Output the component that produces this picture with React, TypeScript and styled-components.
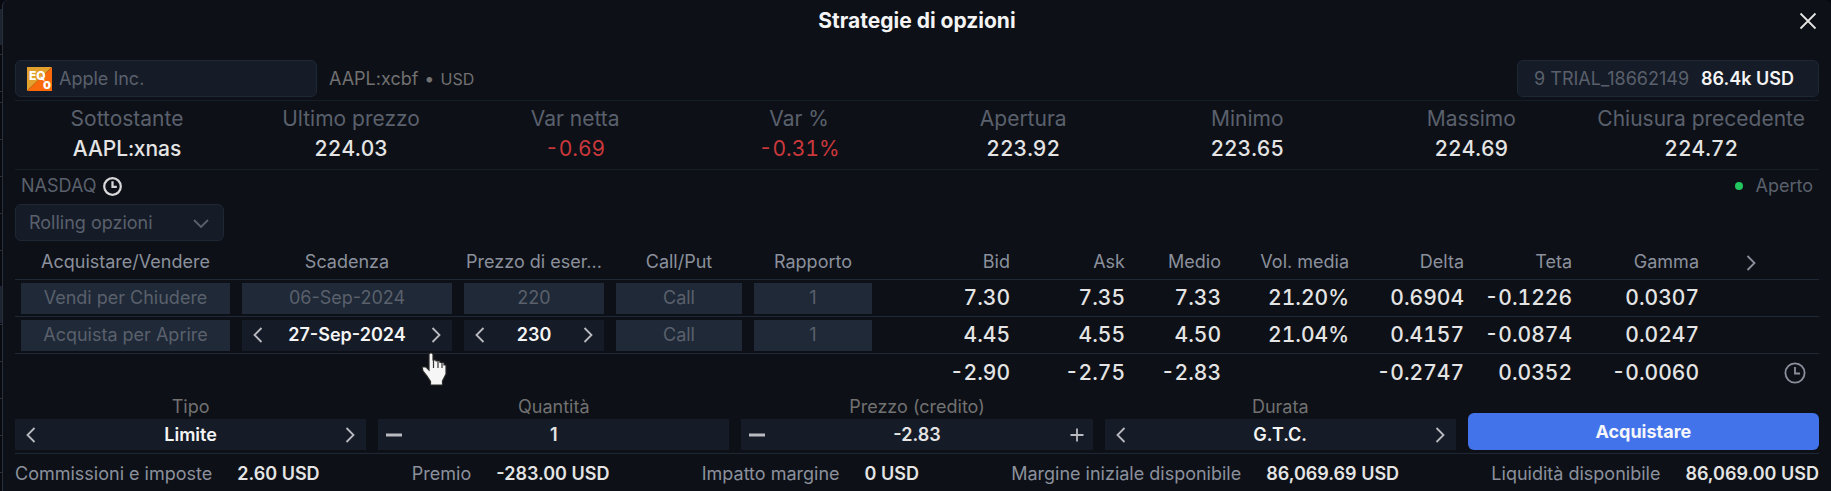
import React, { useState } from 'react';
import styled, { createGlobalStyle, css } from 'styled-components';

const color = {
  backdrop: '#080a10',
  panel: '#0d1017',
  edge: '#27303d',
  field: '#151b27',
  fieldBorder: '#1d2834',
  rule: '#161e28',
  tableRule: '#1e2836',
  locked: '#1f2937',
  faint: '#5a606c',
  muted: '#8b909c',
  gray: '#717171',
  text: '#e4e4e4',
  bright: '#f4f4f4',
  red: '#cb383c',
  green: '#22c55e',
  primary: '#4373ea',
};

const GlobalStyle = createGlobalStyle`
  *, *::before, *::after { box-sizing: border-box; }
  html {
    background:
      linear-gradient(#1d2430, #1d2430) 0 9px / 2px 36px no-repeat,
      linear-gradient(#1d2430, #1d2430) 0 286px / 2px 37px no-repeat,
      repeating-linear-gradient(${color.edge} 0 1px, ${color.backdrop} 1px 37px) 0 102px;
  }
  body {
    margin: 0;
    padding-left: 2px;
    color: ${color.text};
    font-family: Inter, "Liberation Sans", sans-serif;
    font-size: 18px;
    line-height: 24px;
  }
  button, input, select {
    margin: 0;
    padding: 0;
    border: 0;
    background: none;
    color: inherit;
    font: inherit;
  }
  button { cursor: pointer; }
  button:disabled { cursor: default; }
  svg { display: block; flex: none; }
`;

/* Raises the hyphen to the height of the figures. */
const figures = css`
  font-feature-settings: "case";
`;

const Panel = styled.main`
  position: relative;
  min-height: 100vh;
  padding: 0 12px;
  border-left: 1px solid ${color.edge};
  border-top-left-radius: 6px;
  border-top-right-radius: 6px;
  background: ${color.panel};
`;

const TitleBar = styled.header`
  display: grid;
  grid-template-columns: 24px 1fr 24px;
  align-items: center;
  height: 42px;
`;

const Title = styled.h1`
  grid-column: 2;
  margin: 0;
  color: ${color.bright};
  font-size: 21px;
  font-weight: 700;
  text-align: center;
`;

const IconButton = styled.button`
  display: flex;
  align-items: center;
  justify-content: center;
  width: 24px;
  height: 24px;
  color: #b9bbc0;
`;

const CloseButton = styled(IconButton)`
  width: 22px;
  margin-left: auto;
  color: ${color.text};
`;

const InstrumentRow = styled.section`
  display: flex;
  align-items: center;
  gap: 12px;
  padding: 18px 0 3px;
  border-bottom: 1px solid ${color.rule};
`;

const box = css`
  display: flex;
  align-items: center;
  height: 37px;
  border: 1px solid ${color.fieldBorder};
  border-radius: 6px;
  background: ${color.field};
`;

const SearchBox = styled.label`
  ${box}
  gap: 7px;
  width: 302px;
  padding: 0 11px;
`;

const SearchInput = styled.input`
  flex: 1;
  min-width: 0;
  outline: none;
  &::placeholder { color: ${color.faint}; opacity: 1; }
`;

const Ticker = styled.p`
  display: flex;
  align-items: center;
  gap: 6px;
  margin: 0;
  color: ${color.gray};
`;

const Currency = styled.span`
  font-size: 16px;
`;

const Account = styled.button`
  ${box}
  gap: 12px;
  margin-left: auto;
  padding: 0 24px 0 16px;
  color: ${color.faint};
`;

const Balance = styled.span`
  color: ${color.bright};
  font-weight: 600;
`;

const Quotes = styled.dl`
  display: flex;
  margin: 0;
  padding: 3px 0 5px;
  border-bottom: 1px solid ${color.rule};
`;

const Quote = styled.div`
  flex: 1 0 0;
  min-width: max-content;
  padding: 0 14px;
  font-size: 21px;
  line-height: 30px;
  text-align: center;
`;

const QuoteLabel = styled.dt`
  color: ${color.faint};
`;

const QuoteValue = styled.dd<{ $down?: boolean }>`
  ${(p) => p.$down && figures}
  margin: 0;
  color: ${(p) => (p.$down ? color.red : color.text)};
  font-weight: ${(p) => (p.$down ? 400 : 500)};
  font-variant-numeric: tabular-nums;
`;

const Exchange = styled.div`
  display: flex;
  align-items: center;
  justify-content: space-between;
  padding: 4px 6px;
  color: ${color.faint};
`;

const Status = styled.span<{ $gap: number }>`
  display: flex;
  align-items: center;
  gap: ${(p) => p.$gap}px;
`;

const Dot = styled.i`
  width: 8px;
  height: 8px;
  border-radius: 50%;
  background: ${color.green};
`;

const StrategyPicker = styled.label`
  ${box}
  position: relative;
  width: 209px;
  margin-top: 2px;
  color: ${color.faint};
  svg { position: absolute; right: 13px; pointer-events: none; }
`;

const StrategySelect = styled.select`
  width: 100%;
  height: 100%;
  padding: 0 40px 0 13px;
  appearance: none;
  outline: none;
`;

const Legs = styled.table`
  width: 100%;
  table-layout: fixed;
  border-collapse: separate;
  border-spacing: 0;
`;

const HeadCell = styled.th<{ $num?: boolean }>`
  height: 39px;
  padding: 4px 6px 0;
  border-bottom: 1px solid ${color.tableRule};
  color: ${color.muted};
  font-weight: 400;
  text-align: ${(p) => (p.$num ? 'right' : 'center')};
  white-space: nowrap;
`;

const Cell = styled.td<{ $last?: boolean }>`
  ${figures}
  height: ${(p) => (p.$last ? 38 : 37)}px;
  padding: 0 6px;
  border-bottom: ${(p) => (p.$last ? '0' : `1px solid ${color.tableRule}`)};
  font-size: 21px;
  font-variant-numeric: tabular-nums;
  font-weight: 500;
  text-align: right;
`;

const Locked = styled.button`
  display: block;
  width: 100%;
  height: 31px;
  background: ${color.locked};
  color: ${color.faint};
  font-size: 18px;
  font-variant-numeric: normal;
  font-weight: 400;
  ${figures}
`;

const StepperBox = styled.div`
  display: flex;
  align-items: center;
  height: 31px;
  padding: 0 4px;
  background: ${color.field};
  font-size: 18px;
  font-variant-numeric: normal;
  font-weight: 600;
`;

const StepperValue = styled.output`
  flex: 1;
  min-width: 0;
  color: ${color.bright};
  text-align: center;
`;

const StepperInput = styled.input`
  flex: 1;
  min-width: 0;
  outline: none;
  color: ${color.text};
  text-align: center;
  ${figures}
`;

const Spacer = styled.span`
  width: 24px;
`;

const MoreColumns = styled(IconButton)`
  margin: 2px auto 0 28px;
  height: 22px;
  color: ${color.muted};
`;

const History = styled(IconButton)`
  margin: 0 6px 0 auto;
  color: ${color.muted};
`;

const Order = styled.form`
  display: grid;
  grid-template-columns: repeat(5, minmax(0, 1fr));
  align-items: end;
  gap: 12px;
  padding: 3px 0;
  border-bottom: 1px solid ${color.fieldBorder};
`;

const Field = styled.div`
  display: flex;
  flex-direction: column;
`;

const FieldLabel = styled.label`
  color: ${color.gray};
  text-align: center;
`;

const Submit = styled.button`
  height: 37px;
  border-radius: 6px;
  background: ${color.primary};
  color: #f4f6fb;
  font-weight: 700;
`;

const Summary = styled.dl`
  display: flex;
  justify-content: space-between;
  margin: 0;
  padding: 8px 0 6px;
  white-space: nowrap;
`;

const SummaryItem = styled.div`
  display: flex;
  gap: 25px;
`;

const SummaryLabel = styled.dt`
  color: ${color.muted};
`;

const SummaryValue = styled.dd`
  ${figures}
  margin: 0;
  font-weight: 600;
`;

const Pointer = styled.svg`
  position: absolute;
  top: 352px;
  left: 418px;
  pointer-events: none;
`;

type GlyphName = 'left' | 'right' | 'down' | 'minus' | 'plus' | 'close';

const glyphs: Record<GlyphName, string> = {
  left: 'M12.5 2 5.5 9l7 7',
  right: 'M5.5 2l7 7-7 7',
  down: 'M2 6l7 7 7-7',
  minus: 'M1 9h16',
  plus: 'M2.5 9h13M9 2.5v13',
  close: 'M1.5 1.5l15 15M16.5 1.5l-15 15',
};

const Glyph = ({ name }: { name: GlyphName }) => (
  <svg width="18" height="18" viewBox="0 0 18 18" fill="none" stroke="currentColor" strokeWidth={name === 'minus' ? 3 : 1.8} aria-hidden="true">
    <path d={glyphs[name]} />
  </svg>
);

const Clock = ({ size, stroke, tint }: { size: number; stroke: number; tint?: string }) => (
  <svg width={size} height={size} viewBox="0 0 22 22" fill="none" stroke={tint ?? 'currentColor'} strokeWidth={stroke} aria-hidden="true">
    <circle cx="11" cy="11" r="9.6" />
    <path d="M11 5v6.5h5" />
  </svg>
);

const EquityLogo = () => (
  <svg width="25" height="24" viewBox="0 0 25 24" aria-hidden="true">
    <path d="M0 0h25L0 24z" fill="#e2a02c" />
    <path d="M25 0v24H0z" fill="#fb6a0a" />
    <text x="2" y="12.5" fontSize="12" fontWeight="800" fill="#fff">EQ</text>
    <text x="16" y="22" fontSize="13" fontWeight="800" fill="#fff">o</text>
  </svg>
);

const quotes = [
  { label: 'Sottostante', value: 'AAPL:xnas' },
  { label: 'Ultimo prezzo', value: '224.03' },
  { label: 'Var netta', value: '-0.69', down: true },
  { label: 'Var %', value: '-0.31%', down: true },
  { label: 'Apertura', value: '223.92' },
  { label: 'Minimo', value: '223.65' },
  { label: 'Massimo', value: '224.69' },
  { label: 'Chiusura precedente', value: '224.72' },
];

const columns = [
  { title: 'Acquistare/Vendere', width: 221 },
  { title: 'Scadenza', width: 222 },
  { title: 'Prezzo di eser...', hint: 'Prezzo di esercizio', width: 152 },
  { title: 'Call/Put', width: 138 },
  { title: 'Rapporto', width: 130 },
  { title: 'Bid', width: 138, num: true },
  { title: 'Ask', width: 115, num: true },
  { title: 'Medio', width: 96, num: true },
  { title: 'Vol. media', width: 128, num: true },
  { title: 'Delta', width: 115, num: true },
  { title: 'Teta', width: 108, num: true },
  { title: 'Gamma', width: 127, num: true },
];

const legs = [
  {
    side: 'Vendi per Chiudere', expiry: '06-Sep-2024', strike: '220', editable: false,
    values: ['7.30', '7.35', '7.33', '21.20%', '0.6904', '-0.1226', '0.0307'],
  },
  {
    side: 'Acquista per Aprire', expiry: '27-Sep-2024', strike: '230', editable: true,
    values: ['4.45', '4.55', '4.50', '21.04%', '0.4157', '-0.0874', '0.0247'],
  },
];

const totals = ['-2.90', '-2.75', '-2.83', '', '-0.2747', '0.0352', '-0.0060'];

const summary = [
  ['Commissioni e imposte', '2.60 USD'],
  ['Premio', '-283.00 USD'],
  ['Impatto margine', '0 USD'],
  ['Margine iniziale disponibile', '86,069.69 USD'],
  ['Liquidità disponibile', '86,069.00 USD'],
];

const Picker = ({ id, label, value }: { id?: string; label: string; value: string }) => (
  <StepperBox role="group" aria-label={label}>
    <IconButton type="button" aria-label={`${label}: precedente`}><Glyph name="left" /></IconButton>
    <StepperValue id={id}>{value}</StepperValue>
    <IconButton type="button" aria-label={`${label}: successivo`}><Glyph name="right" /></IconButton>
  </StepperBox>
);

const NumberField = ({ id, label, initial, canAdd }: { id: string; label: string; initial: string; canAdd?: boolean }) => {
  const [value, setValue] = useState(initial);
  return (
    <Field>
      <FieldLabel htmlFor={id}>{label}</FieldLabel>
      <StepperBox>
        <IconButton type="button" aria-label={`${label}: diminuisci`}><Glyph name="minus" /></IconButton>
        <StepperInput id={id} inputMode="decimal" value={value} onChange={(e) => setValue(e.target.value)} />
        {canAdd ? (
          <IconButton type="button" aria-label={`${label}: aumenta`}><Glyph name="plus" /></IconButton>
        ) : (
          <Spacer />
        )}
      </StepperBox>
    </Field>
  );
};

const ChoiceField = ({ id, label, value }: { id: string; label: string; value: string }) => (
  <Field>
    <FieldLabel htmlFor={id}>{label}</FieldLabel>
    <Picker id={id} label={label} value={value} />
  </Field>
);

export default function App() {
  return (
    <>
      <GlobalStyle />
      <Panel>
        <TitleBar>
          <Title>Strategie di opzioni</Title>
          <CloseButton type="button" aria-label="Chiudi"><Glyph name="close" /></CloseButton>
        </TitleBar>

        <InstrumentRow>
          <SearchBox>
            <EquityLogo />
            <SearchInput type="text" placeholder="Apple Inc." aria-label="Strumento" />
          </SearchBox>
          <Ticker>AAPL:xcbf <span>•</span> <Currency>USD</Currency></Ticker>
          <Account type="button">
            <span>9 TRIAL_18662149</span>
            <Balance>86.4k USD</Balance>
          </Account>
        </InstrumentRow>

        <Quotes>
          {quotes.map((q) => (
            <Quote key={q.label}>
              <QuoteLabel>{q.label}</QuoteLabel>
              <QuoteValue $down={q.down}>{q.value}</QuoteValue>
            </Quote>
          ))}
        </Quotes>

        <Exchange>
          <Status $gap={7}>NASDAQ <Clock size={19} stroke={2.6} tint="#d8d8d8" /></Status>
          <Status $gap={13}><Dot /> Aperto</Status>
        </Exchange>

        <StrategyPicker>
          <StrategySelect aria-label="Strategia" defaultValue="rolling">
            <option value="rolling">Rolling opzioni</option>
          </StrategySelect>
          <Glyph name="down" />
        </StrategyPicker>

        <Legs>
          <colgroup>
            {columns.map((c) => <col key={c.title} width={c.width} />)}
            <col width={114} />
          </colgroup>
          <thead>
            <tr>
              {columns.map((c) => <HeadCell key={c.title} scope="col" $num={c.num} title={c.hint}>{c.title}</HeadCell>)}
              <HeadCell scope="col">
                <MoreColumns type="button" aria-label="Altre colonne"><Glyph name="right" /></MoreColumns>
              </HeadCell>
            </tr>
          </thead>
          <tbody>
            {legs.map((leg) => (
              <tr key={leg.side}>
                <Cell><Locked type="button" disabled>{leg.side}</Locked></Cell>
                <Cell>
                  {leg.editable ? <Picker label="Scadenza" value={leg.expiry} /> : <Locked type="button" disabled>{leg.expiry}</Locked>}
                </Cell>
                <Cell>
                  {leg.editable ? <Picker label="Prezzo di esercizio" value={leg.strike} /> : <Locked type="button" disabled>{leg.strike}</Locked>}
                </Cell>
                <Cell><Locked type="button" disabled>Call</Locked></Cell>
                <Cell><Locked type="button" disabled>1</Locked></Cell>
                {leg.values.map((v, i) => <Cell key={i}>{v}</Cell>)}
                <Cell />
              </tr>
            ))}
          </tbody>
          <tfoot>
            <tr>
              <Cell $last colSpan={5} />
              {totals.map((v, i) => <Cell $last key={i}>{v}</Cell>)}
              <Cell $last>
                <History type="button" aria-label="Cronologia"><Clock size={22} stroke={1.8} /></History>
              </Cell>
            </tr>
          </tfoot>
        </Legs>

        <Order onSubmit={(e) => e.preventDefault()}>
          <ChoiceField id="type" label="Tipo" value="Limite" />
          <NumberField id="quantity" label="Quantità" initial="1" />
          <NumberField id="price" label="Prezzo (credito)" initial="-2.83" canAdd />
          <ChoiceField id="duration" label="Durata" value="G.T.C." />
          <Submit type="submit">Acquistare</Submit>
        </Order>

        <Summary>
          {summary.map(([label, value]) => (
            <SummaryItem key={label}>
              <SummaryLabel>{label}</SummaryLabel>
              <SummaryValue>{value}</SummaryValue>
            </SummaryItem>
          ))}
        </Summary>

        <Pointer width="27" height="35" viewBox="0 0 27 35" aria-hidden="true">
          <path
            d="M8 2.5C8 .5 12 .5 12 2.5V8h3v1h4v1.5h4V13h2v9l-2 4-1.5 3v4H9.5v-3.5L6 24l-4-5-1-4h4l3 3z"
            fill="#f6f6f6" stroke="#2a2a2a" strokeWidth="1.2"
          />
          <path d="M12.5 8v8M17 9.5V16M21 11v5" stroke="#333" strokeWidth="1.2" fill="none" />
        </Pointer>
      </Panel>
    </>
  );
}
